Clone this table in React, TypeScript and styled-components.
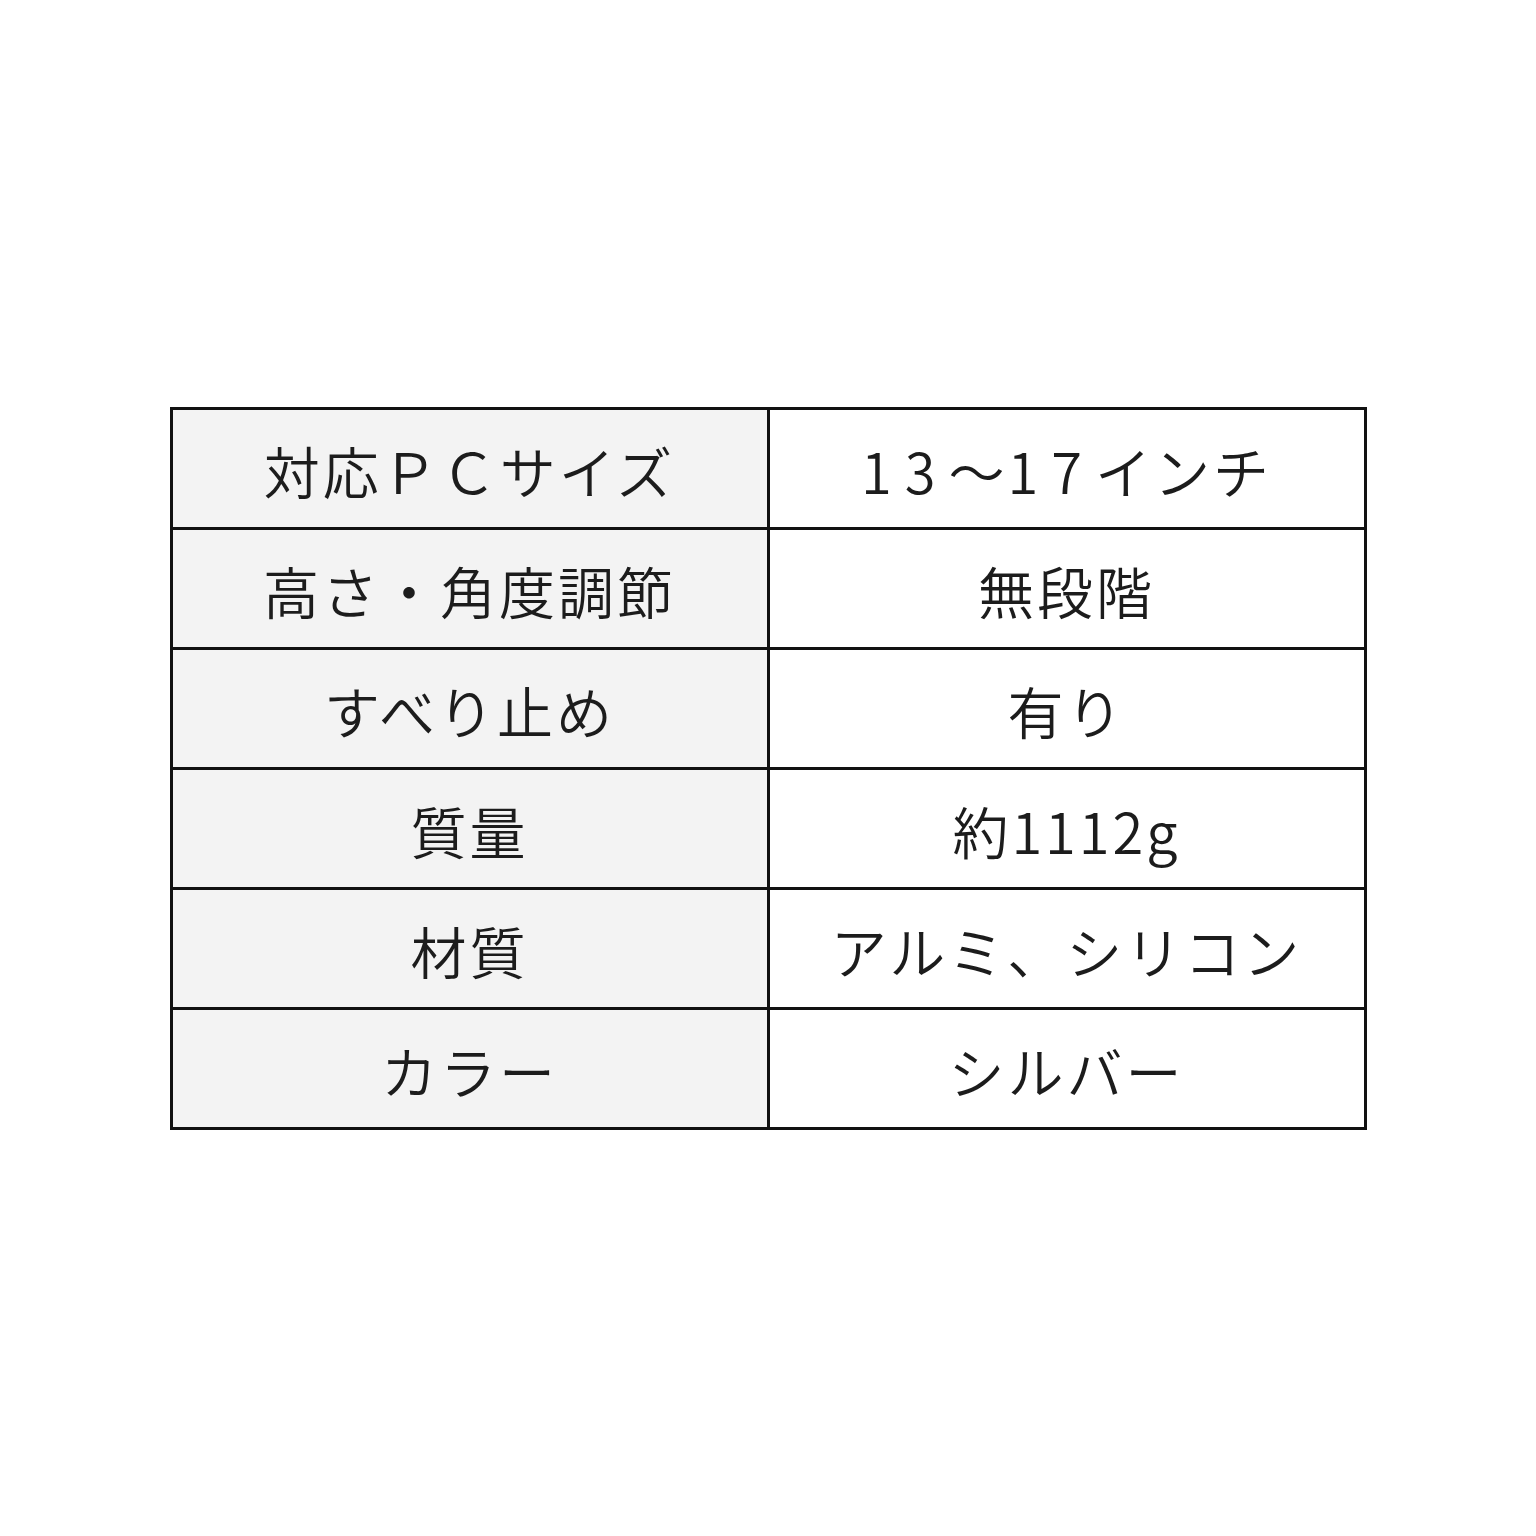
import React from "react";
import styled, { createGlobalStyle } from "styled-components";

const Global = createGlobalStyle`
  html, body { margin: 0; padding: 0; background: #ffffff; }
`;

const Page = styled.div`
  width: 1536px;
  height: 1536px;
  display: flex;
  align-items: center;
  justify-content: center;
  background: #ffffff;
  font-family: "Noto Sans CJK JP", "Noto Sans", sans-serif;
`;

const Table = styled.table`
  width: 1197px;
  border-collapse: collapse;
  border: 3px solid #111111;
  table-layout: fixed;
`;

const Row = styled.tr`
  height: 120px;
`;

const Cell = styled.td<{ $head?: boolean }>`
  width: 50%;
  border: 3px solid #111111;
  background: ${(p) => (p.$head ? "#f3f3f3" : "#ffffff")};
  color: #1c1c1c;
  font-size: 56px;
  font-weight: 350;
  letter-spacing: 3px;
  text-align: center;
  vertical-align: middle;
  padding: 4px 0 0 0;
  line-height: 1;
  white-space: nowrap;
`;

const Digits = styled.span`
  letter-spacing: 13px;
`;

export default function App() {
  return (
    <>
      <Global />
      <Page>
        <Table>
          <tbody>
            <Row>
              <Cell $head>対応ＰＣサイズ</Cell>
              <Cell>
                <Digits>13</Digits>～<Digits>17</Digits>インチ
              </Cell>
            </Row>
            <Row>
              <Cell $head>高さ・角度調節</Cell>
              <Cell>無段階</Cell>
            </Row>
            <Row>
              <Cell $head>すべり止め</Cell>
              <Cell>有り</Cell>
            </Row>
            <Row>
              <Cell $head>質量</Cell>
              <Cell>約1112g</Cell>
            </Row>
            <Row>
              <Cell $head>材質</Cell>
              <Cell>アルミ、シリコン</Cell>
            </Row>
            <Row>
              <Cell $head>カラー</Cell>
              <Cell>シルバー</Cell>
            </Row>
          </tbody>
        </Table>
      </Page>
    </>
  );
}
